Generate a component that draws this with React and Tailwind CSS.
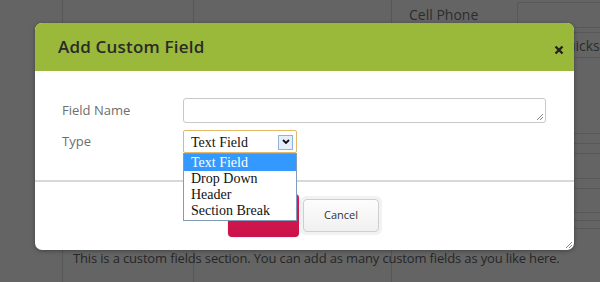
import React from 'react';

const sans = { fontFamily: '"Open Sans", "Liberation Sans", sans-serif' };

function Background() {
  return (
    <div className="absolute inset-0 flex bg-[#646464]">
      <div className="w-[63px] shrink-0 border-r border-[#575757]" />
      <div className="w-[131px] shrink-0 border-r border-[#575757]" />
      <div className="w-[198px] shrink-0 border-r border-[#575757]" />
      <div className="flex-1 min-w-0 flex flex-col">
        <div className="flex items-start h-[60px]">
          <div className="w-[125px] shrink-0 pt-[4px] pl-[17px] text-[14px] text-[#2c2c2c]">
            Cell Phone
          </div>
          <div className="flex-1 min-w-0 flex flex-col gap-[4px] pt-[2px]">
            <div className="h-[26px] rounded-l-[3px] border border-r-0 border-[#585858]" />
            <div className="h-[26px] rounded-l-[3px] border border-r-0 border-[#585858] pl-[38px] pt-[2px] text-[14px] text-[#2c2c2c] whitespace-nowrap overflow-hidden">
              Quicks
            </div>
          </div>
        </div>
        <div className="ml-auto w-[27px] flex flex-col">
          <div className="h-[73px]" />
          <div className="h-[10px] border-t border-[#585858]" />
          <div className="h-[10px] border-t border-[#585858]" />
          <div className="h-[25px] border-t border-[#585858]" />
          <div className="h-[10px] border-t border-[#585858]" />
          <div className="h-[24px] border-t border-[#585858]" />
          <div className="h-[8px] border-t border-[#585858]" />
          <div className="h-[8px] border-t border-[#585858]" />
          <div className="border-t border-[#585858]" />
        </div>
      </div>
    </div>
  );
}

function Grip({ className }) {
  return (
    <svg width="10" height="10" viewBox="0 0 10 10" className={className}>
      <path d="M9 3 L3 9 M9 6 L6 9" stroke="#888" strokeWidth="1" />
    </svg>
  );
}

export default function App() {
  return (
    <div className="relative w-[600px] h-[282px] overflow-hidden" style={sans}>
      <Background />
      <div className="absolute left-[73px] top-[249px] text-[13px] tracking-[-0.15px] text-[#262626] whitespace-nowrap">
        This is a custom fields section. You can add as many custom fields as you like here.
      </div>

      <div className="absolute left-[35px] top-[23px] w-[539px] h-[227px] rounded-[7px] bg-white shadow-[0_1px_4px_rgba(0,0,0,0.35)] overflow-hidden flex flex-col">
        <div className="h-[48px] shrink-0 bg-[#9ab83a] flex items-center justify-between pl-[23px] pr-[10px]">
          <span className="text-[17px] font-semibold text-[#2a2a2a] tracking-[0.2px]">Add Custom Field</span>
          <svg width="10" height="10" viewBox="0 0 10 10" className="mt-[6px]">
            <path d="M1.5 1.5 L8.5 8.5 M8.5 1.5 L1.5 8.5" stroke="#222" strokeWidth="2.4" />
          </svg>
        </div>

        <div className="h-[109px] shrink-0 pt-[27px] pl-[27px] pr-[28px] flex flex-col gap-[7px]">
          <div className="flex items-center">
            <span className="w-[121px] text-[13px] text-[#6e6e6e]">Field Name</span>
            <div className="relative flex-1 h-[25px] rounded-[3px] border border-[#c8c8c8] bg-white">
              <Grip className="absolute right-[1px] bottom-[1px]" />
            </div>
          </div>
          <div className="flex items-start">
            <span className="w-[121px] pt-[2px] text-[13px] text-[#6e6e6e]">Type</span>
            <div className="relative">
              <div className="w-[114px] h-[23px] rounded-[2px] border border-[#e3b868] bg-white flex items-center pl-[7px] pr-[3px] pt-[1px] font-['Liberation_Serif',serif] text-[14px] text-[#111]">
                <span className="flex-1">Text Field</span>
                <span className="w-[15px] h-[15px] border border-[#8fb3de] bg-[#e6eefa] flex items-center justify-center">
                  <svg width="8" height="6" viewBox="0 0 8 6">
                    <path d="M1 1 L4 4 L7 1" stroke="#111" strokeWidth="1.8" fill="none" />
                  </svg>
                </span>
              </div>
              <ul className="absolute left-0 top-[23px] z-10 w-[114px] border border-[#7f9db9] bg-white font-['Liberation_Serif',serif] text-[14px] leading-[16px] text-[#111]">
                <li className="bg-[#3399ff] text-white pl-[7px] h-[17px] pt-[1px]">Text Field</li>
                <li className="pl-[7px]">Drop Down</li>
                <li className="pl-[7px]">Header</li>
                <li className="pl-[7px] pb-[1px]">Section Break</li>
              </ul>
            </div>
          </div>
        </div>

        <div className="h-[2px] shrink-0 bg-[#d8d8d8]" />

        <div className="relative flex-1 flex items-start pl-[192px] pt-[11px]">
          <div className="w-[73px] h-[45px] rounded-[5px] p-[1px] bg-[#f3f3f3]">
            <div className="w-full h-full rounded-[4px] bg-gradient-to-b from-[#e01a55] to-[#c9134a]" />
          </div>
          <div className="mt-[3px] w-[82px] h-[39px] rounded-[6px] bg-[#f2f2f2] p-[3px]">
            <div className="w-full h-full rounded-[4px] border border-[#cfcfcf] bg-gradient-to-b from-[#fdfdfd] to-[#f0f0f0] flex items-center justify-center text-[11px] text-[#333]">
              Cancel
            </div>
          </div>
          <Grip className="absolute right-[1px] bottom-[1px]" />
        </div>
      </div>
    </div>
  );
}
